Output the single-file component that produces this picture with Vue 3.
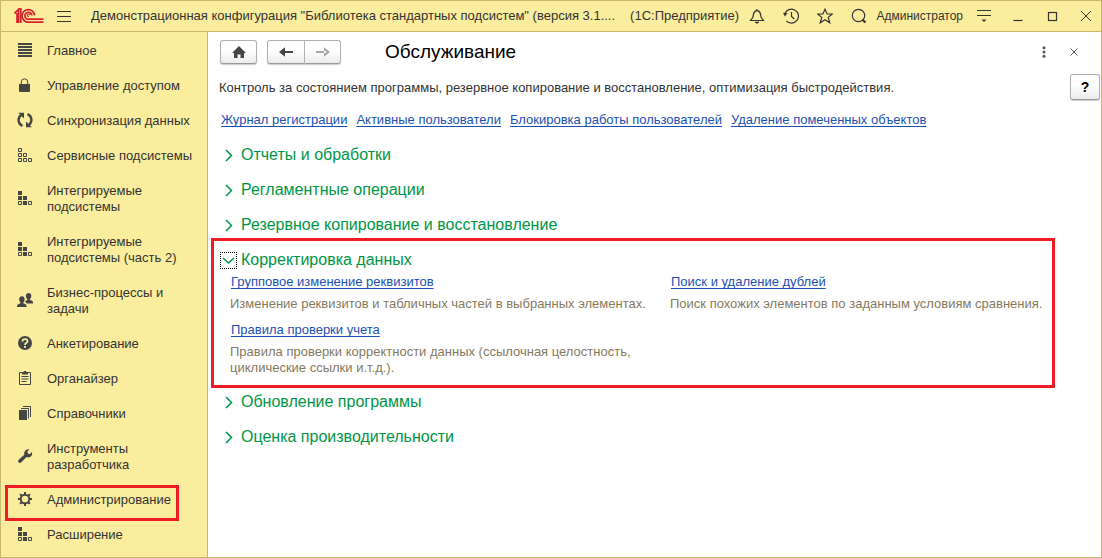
<script setup>
import { ref } from 'vue'

const sections = [
  { icon: 'list', label: 'Главное' },
  { icon: 'lock', label: 'Управление доступом' },
  { icon: 'sync', label: 'Синхронизация данных' },
  { icon: 'cells', label: 'Сервисные подсистемы' },
  { icon: 'blocks', label: 'Интегрируемые подсистемы' },
  { icon: 'blocks', label: 'Интегрируемые подсистемы (часть 2)' },
  { icon: 'people', label: 'Бизнес-процессы и задачи' },
  { icon: 'question', label: 'Анкетирование' },
  { icon: 'clipboard', label: 'Органайзер' },
  { icon: 'books', label: 'Справочники' },
  { icon: 'wrench', label: 'Инструменты разработчика' },
  { icon: 'gear', label: 'Администрирование', marked: true },
  { icon: 'blocks', label: 'Расширение' },
]

const links = [
  'Журнал регистрации',
  'Активные пользователи',
  'Блокировка работы пользователей',
  'Удаление помеченных объектов',
]

const groups = ref([
  { title: 'Отчеты и обработки', open: false },
  { title: 'Регламентные операции', open: false },
  { title: 'Резервное копирование и восстановление', open: false },
  {
    title: 'Корректировка данных',
    open: true,
    items: [
      { name: 'Групповое изменение реквизитов', text: 'Изменение реквизитов и табличных частей в выбранных элементах.' },
      { name: 'Поиск и удаление дублей', text: 'Поиск похожих элементов по заданным условиям сравнения.' },
      { name: 'Правила проверки учета', text: 'Правила проверки корректности данных (ссылочная целостность, циклические ссылки и.т.д.).' },
    ],
  },
  { title: 'Обновление программы', open: false },
  { title: 'Оценка производительности', open: false },
])
</script>

<template>
  <div class="window">
    <header class="titlebar">
      <svg class="logo" viewBox="0 0 30 16" width="30" height="16" aria-label="1С">
        <g fill="none" stroke="#d8232a" stroke-width="1.7">
          <path d="M0.6 5.2 4.6 1.4V15M0.6 5.2H2.2M6.8 15V0.9H4.2M3 15V5" />
          <path d="M20.6 7.4A6.3 6.3 0 1 0 15 14.1H29.5" />
          <path d="M17.9 7.4A3.5 3.5 0 1 0 15 11.2H29.5" />
          <path d="M15.9 7.2A1.3 1.3 0 1 0 14.8 8.6" stroke-width="1.2" />
        </g>
      </svg>
      <button class="tool menu" aria-label="Меню">
        <svg viewBox="0 0 14 12" width="14" height="12"><path d="M0 1.5H14M0 6.5H14M0 11.5H14" stroke="#333" fill="none" /></svg>
      </button>
      <h1 class="caption">
        <span class="config">Демонстрационная конфигурация "Библиотека стандартных подсистем" (версия 3.1....</span>
        <span>(1С:Предприятие)</span>
      </h1>
      <div class="tools">
        <button class="tool" aria-label="Уведомления">
          <svg viewBox="0 0 16 16" width="16" height="16"><path d="M8 1v1.5M1.5 12.5H14.5L12.2 9.6C11.6 5.4 11 2.6 8 2.6S4.4 5.4 3.8 9.6ZM6 14.5H10" fill="none" stroke="#333" stroke-width="1.2" /><path d="M6 13.8H10L8 16Z" fill="#333" /></svg>
        </button>
        <button class="tool" aria-label="История">
          <svg viewBox="0 0 16 16" width="16" height="16"><path d="M3.3 12.9A7 7 0 1 0 1.8 6M8.5 4V8.5L11.3 11" fill="none" stroke="#333" stroke-width="1.2" /><path d="M0 4.8 4.6 5.3 1.8 8.4Z" fill="#333" /></svg>
        </button>
        <button class="tool" aria-label="Избранное">
          <svg viewBox="0 0 16 16" width="16" height="16"><path d="M8 1.2 10.1 6H15.3L11.2 9.4 12.8 14.8 8 11.7 3.2 14.8 4.8 9.4 0.7 6H5.9Z" fill="none" stroke="#333" stroke-width="1.2" /></svg>
        </button>
        <button class="tool" aria-label="Поиск">
          <svg viewBox="0 0 16 16" width="16" height="16"><circle cx="7.5" cy="7.5" r="6.2" fill="none" stroke="#333" stroke-width="1.2" /><path d="M11.4 11.4 14.4 14.6" stroke="#333" stroke-width="2.2" /></svg>
        </button>
      </div>
      <button class="tool user">Администратор</button>
      <button class="tool options" aria-label="Настройки">
        <svg viewBox="0 0 14 12" width="14" height="12"><path d="M0 0.5H14M0 5.5H14" stroke="#333" fill="none" /><path d="M4.5 9.5H9.5L7 12Z" fill="#333" /></svg>
      </button>
      <div class="controls">
        <button class="tool" aria-label="Свернуть">
          <svg viewBox="0 0 12 12" width="12" height="12"><path d="M1.5 10.5H10.5" stroke="#333" stroke-width="1.2" /></svg>
        </button>
        <button class="tool" aria-label="Развернуть">
          <svg viewBox="0 0 12 12" width="12" height="12"><rect x="2.5" y="2.5" width="8" height="8" fill="none" stroke="#333" stroke-width="1.2" /></svg>
        </button>
        <button class="tool" aria-label="Закрыть">
          <svg viewBox="0 0 12 12" width="12" height="12"><path d="M1 1 11 11M11 1 1 11" stroke="#333" /></svg>
        </button>
      </div>
    </header>

    <div class="body">
      <nav class="sidebar">
        <a v-for="s in sections" :key="s.label" href="#" class="section" :class="{ marked: s.marked }">
          <svg class="icon" viewBox="0 0 16 16" width="16" height="16" aria-hidden="true">
            <path v-if="s.icon === 'list'" d="M1 1H15V3H1ZM1 4H15V6H1ZM1 7H15V9H1ZM1 10H15V12H1ZM1 13H15V15H1Z" class="bars" />
            <g v-else-if="s.icon === 'lock'">
              <path d="M2 7H13V14Q13 15 12 15H3Q2 15 2 14Z" />
              <path class="line" d="M4.3 7V5A3.2 3.2 0 0 1 10.7 5V7" />
            </g>
            <g v-else-if="s.icon === 'sync'">
              <path class="thick" d="M5.5 13.9A6.3 6.3 0 0 1 4.2 3M10.5 2.1A6.3 6.3 0 0 1 11.8 13" />
              <path d="M1.2 0.8H7V6.6ZM14.8 15.2H9V9.4Z" />
            </g>
            <path v-else-if="s.icon === 'cells'" class="line" d="M1.5 1.5h3v3h-3ZM1.5 6.5h3v3h-3ZM6.5 6.5h3v3h-3ZM1.5 11.5h3v3h-3ZM6.5 11.5h3v3h-3ZM11.5 11.5h3v3h-3Z" />
            <g v-else-if="s.icon === 'blocks'">
              <path d="M1 1h4v4h-4ZM1 6h4v4h-4ZM6 6h4v4h-4ZM6 11h4v4h-4Z" />
              <path class="line" d="M1.5 11.5h3v3h-3ZM11.5 11.5h3v3h-3Z" />
            </g>
            <g v-else-if="s.icon === 'people'">
              <ellipse cx="4.9" cy="7.4" rx="2.7" ry="3.1" />
              <path d="M0 15V13.5Q0.3 12 3.5 11.2V10H6.3V11.2Q9.3 12 9.5 13.5V15Z" />
              <ellipse cx="11.6" cy="4" rx="2.7" ry="3.1" />
              <path d="M8 9.6Q8.4 8.6 10.3 8V6.5H13V8Q16 8.6 16 10.2V11.5H9.8Q9 10.4 8 9.6Z" />
            </g>
            <g v-else-if="s.icon === 'question'">
              <circle cx="8" cy="8" r="7" />
              <path d="M5.5 6.4Q5.5 4.2 8 4.2T10.5 6.2Q10.5 7.3 9.2 8T8 10" fill="none" stroke="#fbed9e" stroke-width="1.8" />
              <path d="M7 11H9V12.8H7Z" class="hole" />
            </g>
            <g v-else-if="s.icon === 'clipboard'">
              <path class="line" d="M2.5 2.5H13.5V14.5H2.5ZM4.5 6.5H11.5M4.5 9H11.5M4.5 11.5H9.5" />
              <path d="M5 2H6.5L7 1H9L9.5 2H11V4.5H5Z" />
            </g>
            <g v-else-if="s.icon === 'books'">
              <path d="M2 5H10V15H2Z" />
              <path class="line" d="M4 3.5H11.5V13.5M6 1.5H13.5V12" />
            </g>
            <path v-else-if="s.icon === 'wrench'" d="M12.6 1.3 10.4 3.5 10.8 5.6 12.9 6 15 3.9Q15.8 7.3 13.2 8.9 11.5 9.8 9.6 9L4.3 14.3Q3 15.5 1.6 14.5 0.4 13 1.7 11.7L7.3 6.7Q6.6 4.4 8.3 2.6 10.1 0.9 12.6 1.3Z" />
            <g v-else-if="s.icon === 'gear'">
              <circle cx="8" cy="8" r="4.3" fill="none" stroke="#454545" stroke-width="1.9" />
              <path class="teeth" d="M8 1V3.2M8 12.8V15M1 8H3.2M12.8 8H15M3.1 3.1 4.7 4.7M11.3 11.3 12.9 12.9M3.1 12.9 4.7 11.3M11.3 4.7 12.9 3.1" />
            </g>
          </svg>
          <span class="label">{{ s.label }}</span>
        </a>
      </nav>

      <main class="page">
        <div class="bar">
          <button class="btn home" aria-label="Начальная страница">
            <svg viewBox="0 0 16 14" width="16" height="14"><path d="M8 1 15 8H13V13H9.5V9.5H6.5V13H3V8H1Z" fill="#454545" /></svg>
          </button>
          <div class="pair">
            <button class="btn" aria-label="Назад">
              <svg viewBox="0 0 16 12" width="16" height="12"><path d="M1 6 7 1.3V10.7ZM5 5H15V7H5Z" fill="#454545" /></svg>
            </button>
            <button class="btn" aria-label="Вперед">
              <svg viewBox="0 0 16 12" width="16" height="12"><path d="M15 6 9 1.3V10.7ZM1 5H11V7H1Z" fill="#a8a8a8" /></svg>
            </button>
          </div>
          <h2 class="title">Обслуживание</h2>
          <button class="tool" aria-label="Еще">
            <svg viewBox="0 0 12 12" width="12" height="12"><g fill="#555"><circle cx="6" cy="1.7" r="1.5" /><circle cx="6" cy="6" r="1.5" /><circle cx="6" cy="10.3" r="1.5" /></g></svg>
          </button>
          <button class="tool" aria-label="Закрыть страницу">
            <svg viewBox="0 0 12 12" width="12" height="12"><path d="M2.5 2.5 9.5 9.5M9.5 2.5 2.5 9.5" stroke="#555" /></svg>
          </button>
        </div>

        <div class="intro">
          <p class="label">Контроль за состоянием программы, резервное копирование и восстановление, оптимизация быстродействия.</p>
          <button class="btn help" aria-label="Справка">?</button>
        </div>

        <div class="links">
          <a v-for="l in links" :key="l" href="#" class="link">{{ l }}</a>
        </div>

        <div class="groups">
          <section v-for="g in groups" :key="g.title" class="group" :class="{ open: g.open }">
            <button class="head" :aria-expanded="g.open" @click="g.open = !g.open">
              <span class="arrow">
                <svg viewBox="0 0 15 15" width="15" height="15">
                  <path :d="g.open ? 'M2 5 7.5 10 13 5' : 'M5 2 10.5 7.5 5 13'" fill="none" stroke="#009646" stroke-width="1.5" />
                </svg>
              </span>
              <span>{{ g.title }}</span>
            </button>
            <div v-if="g.open && g.items" class="items">
              <div v-for="i in g.items" :key="i.name" class="item">
                <a href="#" class="link">{{ i.name }}</a>
                <p>{{ i.text }}</p>
              </div>
            </div>
          </section>
        </div>
      </main>
    </div>
  </div>
</template>

<style>
body {
  margin: 0;
}
</style>

<style scoped>
.window {
  box-sizing: border-box;
  min-height: 100vh;
  display: flex;
  flex-direction: column;
  border: 1px solid #c8b76c;
  background: #fff;
  color: #333;
  font: 13px/16px "Liberation Sans", Arial, sans-serif;
}
button {
  font: inherit;
  color: inherit;
  padding: 0;
  margin: 0;
  cursor: pointer;
}
svg {
  display: block;
  flex: none;
}
h1,
h2,
p {
  margin: 0;
  font-weight: normal;
}
.tool {
  border: 0;
  background: none;
  flex: none;
}
.titlebar {
  display: flex;
  align-items: center;
  height: 30px;
  padding: 0 9px 0 13px;
  background: #fbed9e;
  border-bottom: 1px solid #c8b76c;
}
.menu {
  margin-left: 13px;
}
.caption {
  display: flex;
  flex: 1;
  gap: 15px;
  min-width: 0;
  margin-left: 20px;
  font-size: 13px;
  white-space: nowrap;
}
.config {
  overflow: hidden;
  text-overflow: ellipsis;
}
.tools {
  display: flex;
  gap: 18px;
}
.user {
  margin-left: 9px;
  font-size: 12px;
}
.options {
  margin-left: 14px;
}
.controls {
  display: flex;
  gap: 22px;
  margin-left: 21px;
}
.body {
  display: flex;
  flex: 1;
}
.sidebar {
  flex: none;
  width: 206px;
  background: #fbed9e;
  border-right: 1px solid #c8b76c;
}
.section {
  position: relative;
  display: flex;
  align-items: center;
  gap: 14px;
  padding: 9px 14px 8px 16px;
  color: #333;
  text-decoration: none;
}
.label {
  padding-top: 2px;
}
.marked::after,
.group.open::after {
  content: "";
  position: absolute;
  border: 3px solid #ee1c25;
  pointer-events: none;
}
.marked::after {
  inset: 4px 28px -5px 4px;
}
.icon {
  fill: #454545;
}
.icon .line,
.icon .thick,
.icon .teeth {
  fill: none;
  stroke: #454545;
}
.icon .thick {
  stroke-width: 2.4;
}
.icon .teeth {
  stroke-width: 2;
}
.icon .hole {
  fill: #fbed9e;
}
.page {
  flex: 1;
  min-width: 0;
}
.bar {
  display: flex;
  align-items: center;
  padding: 8px 21px 0 12px;
  gap: 18px;
}
.btn {
  display: flex;
  align-items: center;
  justify-content: center;
  box-sizing: border-box;
  width: 37px;
  height: 24px;
  border: 1px solid #b0b0b0;
  border-bottom-color: #999;
  border-radius: 3px;
  background: linear-gradient(#fff 40%, #ececec);
  box-shadow: 0 1px 1px #ccc;
}
.pair {
  display: flex;
  margin-left: -8px;
}
.pair .btn:first-child {
  width: 38px;
  border-radius: 3px 0 0 3px;
}
.pair .btn:last-child {
  border-left: 0;
  width: 36px;
  border-radius: 0 3px 3px 0;
}
.title {
  flex: 1;
  margin-left: 26px;
  color: #000;
  font-size: 19px;
  line-height: 24px;
}
.intro {
  display: flex;
  align-items: center;
  justify-content: space-between;
  margin-top: 10px;
  padding: 0 1px 0 11px;
}
.help {
  width: 30px;
  height: 26px;
  color: #000;
  font-size: 14px;
  font-weight: bold;
}
.links {
  display: flex;
  flex-wrap: wrap;
  gap: 9px;
  margin-top: 12px;
  padding: 0 13px;
}
.link {
  color: #1c50b4;
  text-decoration: underline;
  text-underline-offset: 2px;
  text-decoration-thickness: 1px;
  text-decoration-skip-ink: none;
}
.groups {
  display: flex;
  flex-direction: column;
  gap: 15px;
  margin: 17px 46px 0 3px;
}
.group {
  position: relative;
}
.group.open {
  padding-bottom: 1px;
}
.group.open::after {
  inset: -12px 0 -11px;
}
.head {
  display: flex;
  align-items: center;
  gap: 4px;
  padding: 0 0 0 9px;
  border: 0;
  background: none;
  color: #009646;
  font-size: 16px;
  line-height: 20px;
}
.arrow {
  border: 1px dotted transparent;
}
.open .arrow {
  border-color: #000;
}
.items {
  display: grid;
  grid-template-columns: 420px 1fr;
  gap: 10px 20px;
  margin-top: 4px;
  padding-left: 19px;
}
.item .link {
  margin-left: 1px;
}
.item p {
  margin-top: 6px;
  color: #857a5f;
}
</style>
